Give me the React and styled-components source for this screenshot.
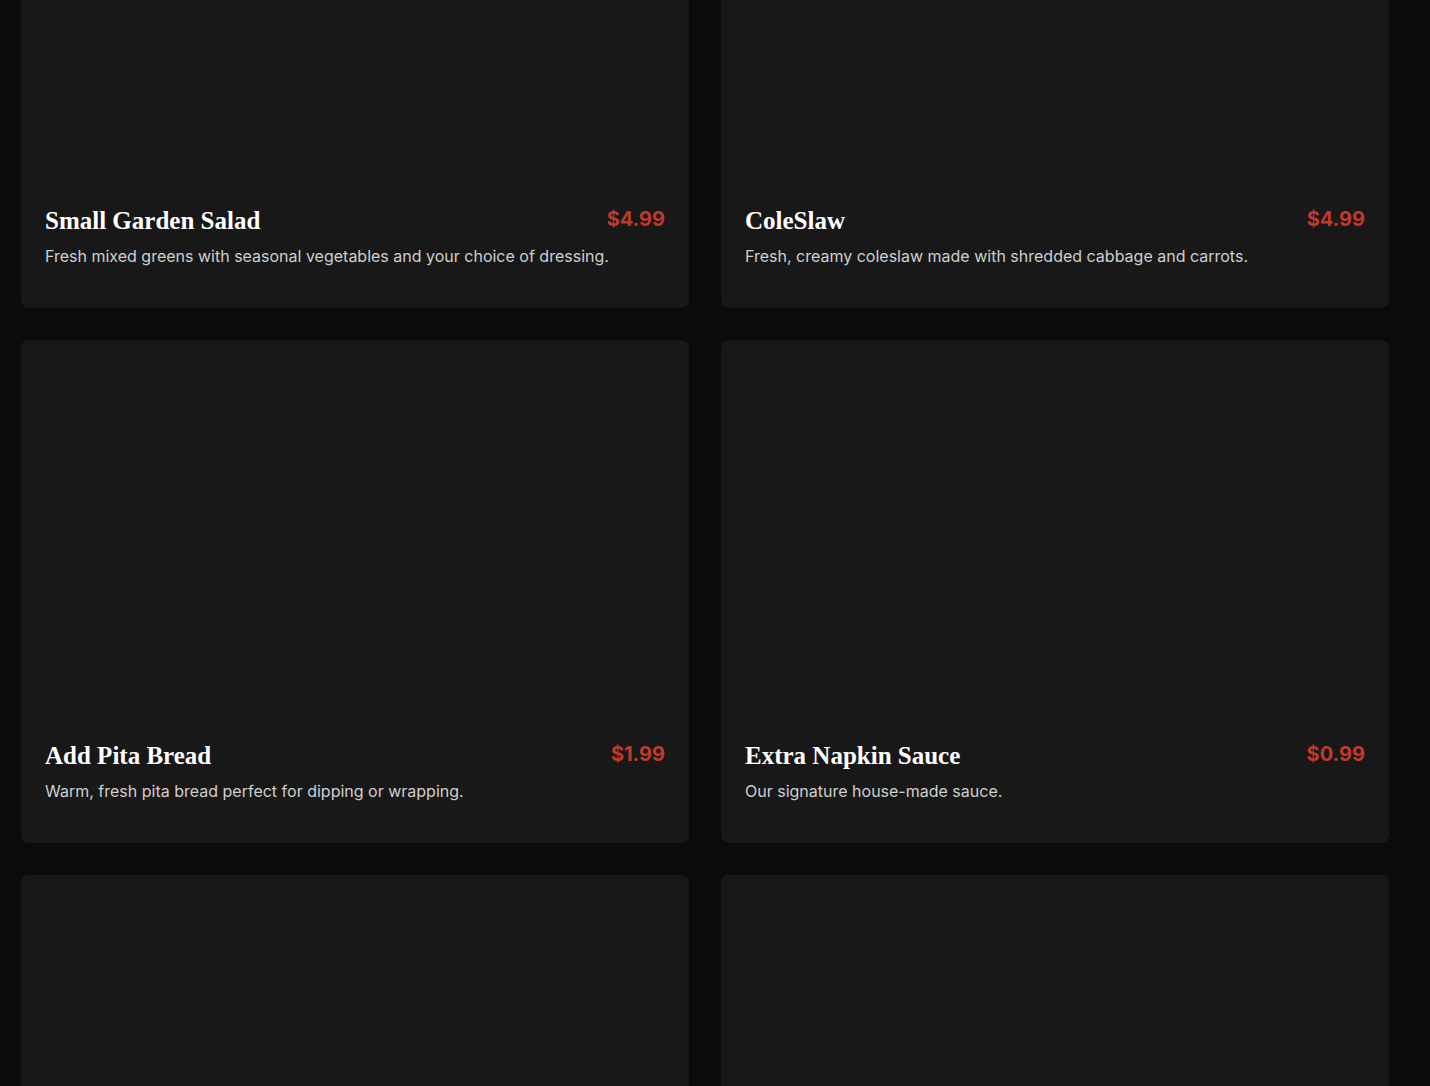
import React from "react";
import styled, { createGlobalStyle } from "styled-components";

const GlobalStyle = createGlobalStyle`
  html, body {
    margin: 0;
    padding: 0;
    background: #0a0b0d;
    font-family: Inter, "Noto Sans", sans-serif;
    overflow: hidden;
  }
`;

const items = [
  { title: "Small Garden Salad", price: "$4.99", description: "Fresh mixed greens with seasonal vegetables and your choice of dressing." },
  { title: "ColeSlaw", price: "$4.99", description: "Fresh, creamy coleslaw made with shredded cabbage and carrots." },
  { title: "Add Pita Bread", price: "$1.99", description: "Warm, fresh pita bread perfect for dipping or wrapping." },
  { title: "Extra Napkin Sauce", price: "$0.99", description: "Our signature house-made sauce." },
  { title: "Side of Rice", price: "$2.99", description: "Fluffy seasoned rice." },
  { title: "Side of Fries", price: "$3.49", description: "Crispy golden fries." },
];

const Page = styled.div`
  width: 1410px;
  box-sizing: border-box;
  padding: 0 21px 40px;
  margin-top: -195px;
`;

const Grid = styled.div`
  display: grid;
  grid-template-columns: repeat(2, 668px);
  gap: 32px;
`;

const Card = styled.div`
  display: flex;
  flex-direction: column;
  height: 503px;
  background: #181818;
  border-radius: 8px;
  overflow: hidden;
`;

const ImageBox = styled.div`
  height: 376px;
  background: #181818;
`;

const Body = styled.div`
  padding: 24px 24px 40px;
`;

const Head = styled.div`
  display: flex;
  justify-content: space-between;
  align-items: flex-start;
  gap: 16px;
`;

const Title = styled.h3`
  margin: 0;
  font-family: "Liberation Serif", "DejaVu Serif", serif;
  font-weight: 700;
  font-size: 25px;
  line-height: 31px;
  color: #ffffff;
`;

const Price = styled.span`
  padding-top: 1px;
  font-family: Inter, sans-serif;
  font-weight: 700;
  font-size: 20px;
  line-height: 26px;
  color: #c0392b;
`;

const Description = styled.p`
  margin: 8px 0 0;
  font-size: 16px;
  line-height: 24px;
  color: #cfcfcf;
`;

const App = () => (
  <>
    <GlobalStyle />
    <Page>
      <Grid>
        {items.map((item, index) => (
          <Card key={index}>
            <ImageBox />
            <Body>
              <Head>
                <Title>{item.title}</Title>
                <Price>{item.price}</Price>
              </Head>
              <Description>{item.description}</Description>
            </Body>
          </Card>
        ))}
      </Grid>
    </Page>
  </>
);

export default App;
